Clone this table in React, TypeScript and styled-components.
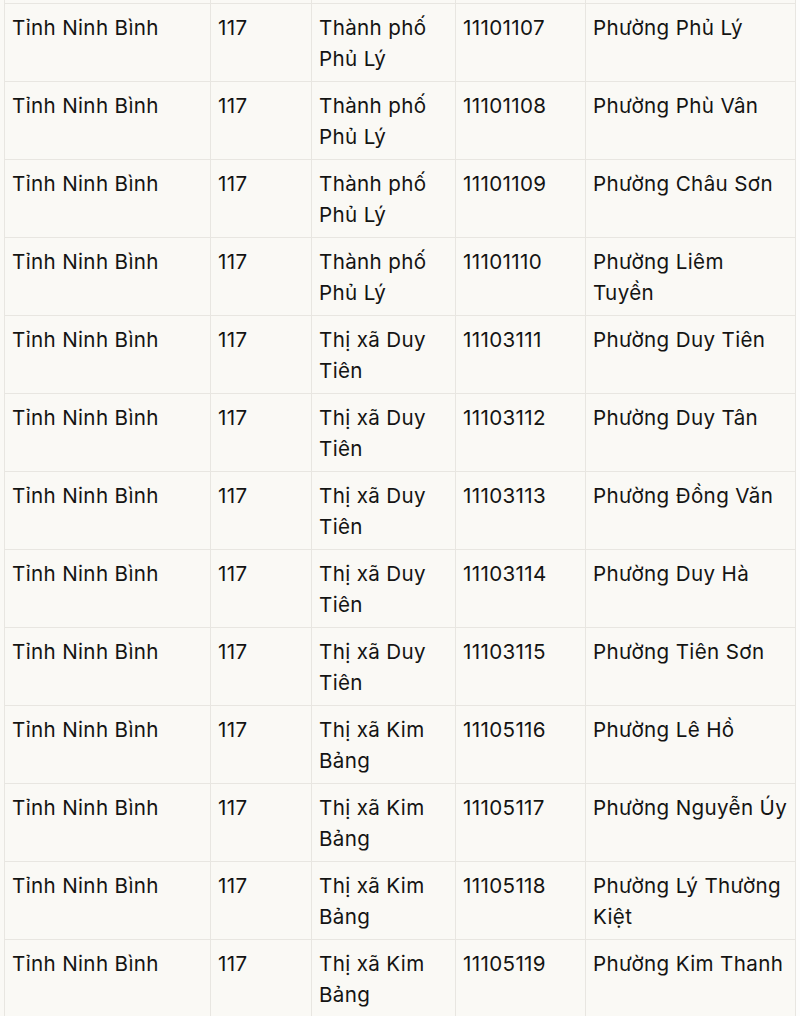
import React from 'react'
import styled, { createGlobalStyle } from 'styled-components'

const GlobalStyle = createGlobalStyle`
	html, body {
		margin: 0;
		padding: 0;
		background: #faf9f5;
	}
	body {
		font-family: Inter, "Noto Sans", "Liberation Sans", sans-serif;
		color: #141413;
	}
`

const Page = styled.div`
	display: flex;
	width: 800px;
	height: 1016px;
	overflow: hidden;
	padding-left: 4px;
	box-sizing: border-box;
`

const Table = styled.table`
	width: 791px;
	flex: none;
	border-collapse: collapse;
	table-layout: fixed;
	background: #faf9f5;
`

const Cell = styled.td`
	border: 1px solid #e8e6e1;
	padding: 8px 6px 7px 7px;
	vertical-align: top;
	font-size: 20.6px;
	line-height: 31px;
	letter-spacing: 0.35px;
`

const CutCell = styled.td`
	border: 1px solid #e8e6e1;
	border-top: none;
	height: 3px;
	padding: 0;
`

const Filler = styled.div`
	flex: 1;
	background: #fdfdfc;
`

type Row = [string, string, string]

const rows: Row[] = [
	['Thành phố Phủ Lý', '11101107', 'Phường Phủ Lý'],
	['Thành phố Phủ Lý', '11101108', 'Phường Phù Vân'],
	['Thành phố Phủ Lý', '11101109', 'Phường Châu Sơn'],
	['Thành phố Phủ Lý', '11101110', 'Phường Liêm Tuyền'],
	['Thị xã Duy Tiên', '11103111', 'Phường Duy Tiên'],
	['Thị xã Duy Tiên', '11103112', 'Phường Duy Tân'],
	['Thị xã Duy Tiên', '11103113', 'Phường Đồng Văn'],
	['Thị xã Duy Tiên', '11103114', 'Phường Duy Hà'],
	['Thị xã Duy Tiên', '11103115', 'Phường Tiên Sơn'],
	['Thị xã Kim Bảng', '11105116', 'Phường Lê Hồ'],
	['Thị xã Kim Bảng', '11105117', 'Phường Nguyễn Úy'],
	['Thị xã Kim Bảng', '11105118', 'Phường Lý Thường Kiệt'],
	['Thị xã Kim Bảng', '11105119', 'Phường Kim Thanh'],
]

const App = () => {
	return (
		<Page>
			<GlobalStyle />
			<Table>
				<colgroup>
					<col style={{ width: 206 }} />
					<col style={{ width: 101 }} />
					<col style={{ width: 144 }} />
					<col style={{ width: 130 }} />
					<col style={{ width: 210 }} />
				</colgroup>
				<tbody>
					{/* tail of the row above, cut off by the screenshot */}
					<tr>
						<CutCell />
						<CutCell />
						<CutCell />
						<CutCell />
						<CutCell />
					</tr>
					{rows.map(([district, code, ward]) => (
						<tr key={code}>
							<Cell>Tỉnh Ninh Bình</Cell>
							<Cell>117</Cell>
							<Cell>{district}</Cell>
							<Cell>{code}</Cell>
							<Cell>{ward}</Cell>
						</tr>
					))}
				</tbody>
			</Table>
			<Filler />
		</Page>
	)
}

export default App
